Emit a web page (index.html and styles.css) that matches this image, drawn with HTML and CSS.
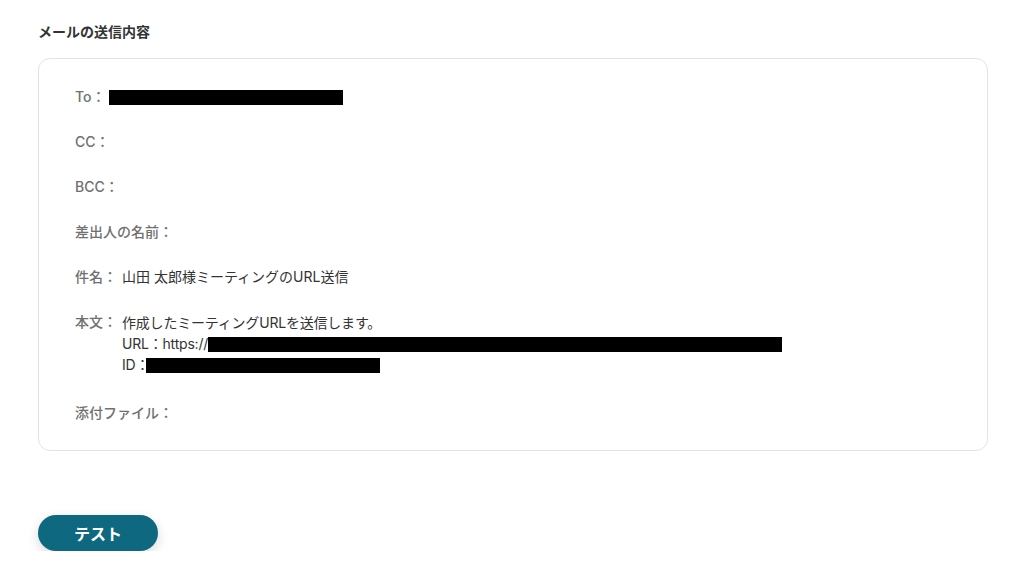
FILE: index.html
```html
<!DOCTYPE html>
<html lang="ja">
<head>
    <meta charset="UTF-8">
    <meta name="viewport" content="width=device-width, initial-scale=1.0">
    <title>メールの送信内容</title>
    <link rel="stylesheet" href="styles.css">
</head>
<body>
    <div class="page">
        <h2 class="section-title">メールの送信内容</h2>
        <div class="mail-card">
            <div class="mail-row">
                <span class="label">To：</span>
                <span class="value"><span class="redact redact-to"></span></span>
            </div>
            <div class="mail-row">
                <span class="label">CC：</span>
            </div>
            <div class="mail-row">
                <span class="label">BCC：</span>
            </div>
            <div class="mail-row">
                <span class="label">差出人の名前：</span>
            </div>
            <div class="mail-row">
                <span class="label">件名：</span>
                <span class="value">山田 太郎様ミーティングのURL送信</span>
            </div>
            <div class="mail-row body-row">
                <span class="label">本文：</span>
                <div class="value body-text">
                    <p>作成したミーティングURLを送信します。</p>
                    <p>URL：https://<span class="redact redact-url"></span></p>
                    <p>ID：<span class="redact redact-id"></span></p>
                </div>
            </div>
            <div class="mail-row">
                <span class="label">添付ファイル：</span>
            </div>
        </div>
        <button class="test-button">テスト</button>
    </div>
</body>
</html>
```

FILE: styles.css
```css
/* 基本 */
body {
    margin: 0;
    background-color: #fff;
    font-family: Inter, "Noto Sans CJK JP", sans-serif;
    color: #333;
}

.page {
    padding: 22px 33px 0 38px;
}

.section-title {
    margin: 0 0 16px;
    font-size: 14px;
    font-weight: 700;
    line-height: 20px;
    color: #333;
}

/* メールカード */
.mail-card {
    border: 1px solid #e3e3e3;
    border-radius: 12px;
    padding: 28px 36px 27px;
    display: flex;
    flex-direction: column;
    gap: 25px;
}

.mail-row {
    display: flex;
    gap: 5px;
    font-size: 14px;
    line-height: 20px;
}

.body-row {
    margin-bottom: 3px;
}

.label {
    color: #707070;
    font-weight: 500;
    white-space: nowrap;
}

.value {
    color: #333;
}

.body-text p {
    margin: 0;
    line-height: 21px;
}

.body-text {
    letter-spacing: -0.2px;
}

.redact {
    display: inline-block;
    background-color: #000;
    vertical-align: -3px;
    height: 15px;
}

.redact-to {
    width: 234px;
    margin-left: -2px;
}

.redact-url {
    width: 574px;
}

.redact-id {
    width: 234px;
    margin-left: -3px;
}

/* ボタン */
.test-button {
    margin-top: 64px;
    width: 120px;
    height: 36px;
    border: none;
    border-radius: 18px;
    background-color: #0e6880;
    color: #fff;
    font-family: inherit;
    font-size: 16px;
    font-weight: 700;
    box-shadow: 0 4px 12px rgba(0, 0, 0, 0.15);
    cursor: pointer;
}
```
